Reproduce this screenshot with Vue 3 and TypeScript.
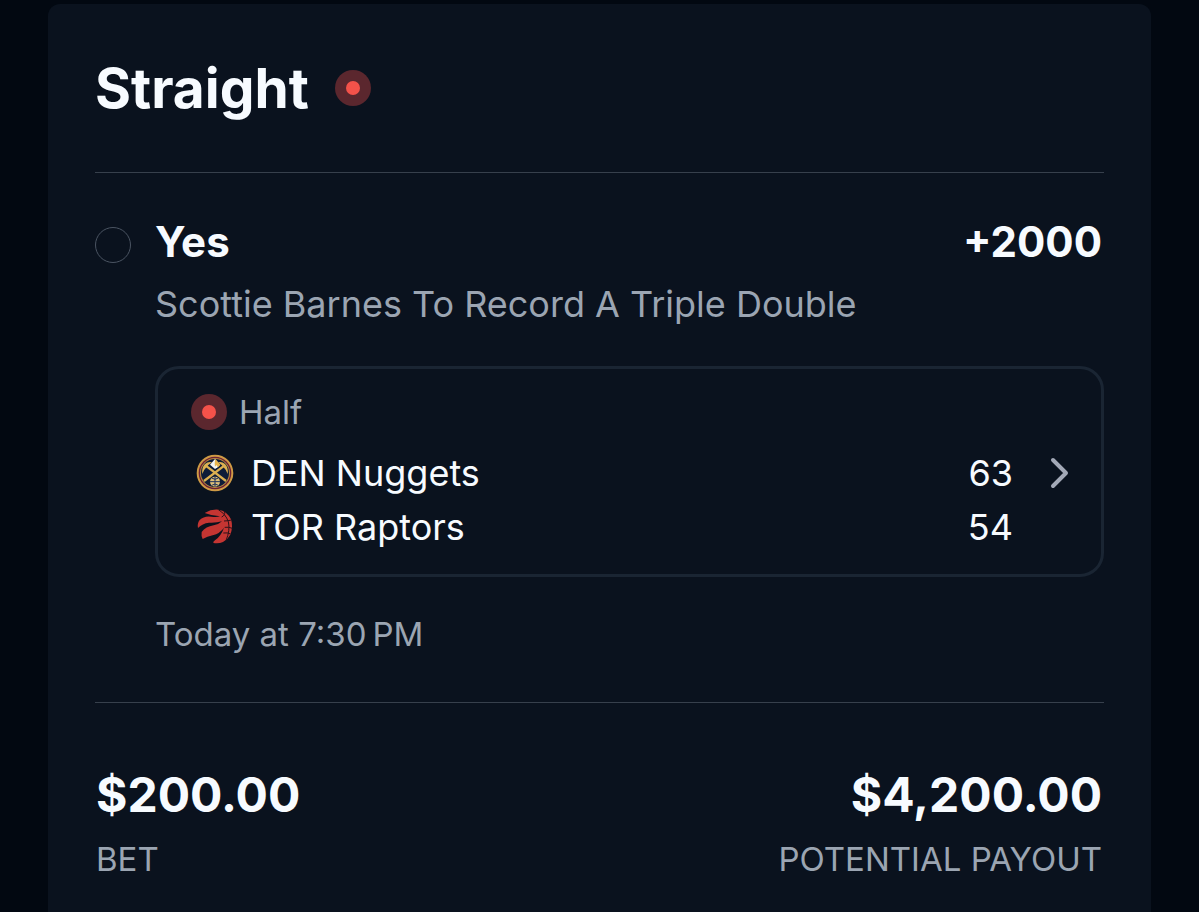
<script setup lang="ts">
import { ref } from 'vue'

interface Team {
  id: 'den' | 'tor'
  name: string
  score: number
}

const picked = ref<boolean>(false)

const bet = {
  type: 'Straight',
  pick: 'Yes',
  odds: '+2000',
  market: 'Scottie Barnes To Record A Triple Double',
  period: 'Half',
  start: 'Today at 7:30\u2009PM',
}

const teams: Team[] = [
  { id: 'den', name: 'DEN Nuggets', score: 63 },
  { id: 'tor', name: 'TOR Raptors', score: 54 },
]

const totals = [
  { amount: '$200.00', label: 'BET' },
  { amount: '$4,200.00', label: 'POTENTIAL PAYOUT' },
]
</script>

<template>
  <main class="page">
    <article class="slip">
      <header class="slip-header">
        <h1 class="title">{{ bet.type }}</h1>
        <span class="live" role="img" aria-label="Live"></span>
      </header>

      <section class="selection">
        <input id="pick" class="radio" type="radio" :checked="picked" @change="picked = true" />
        <div class="details">
          <div class="pick-row">
            <label for="pick">{{ bet.pick }}</label>
            <span>{{ bet.odds }}</span>
          </div>
          <p class="market">{{ bet.market }}</p>

          <button class="game" type="button">
            <span class="status">
              <span class="live"></span>
              <span>{{ bet.period }}</span>
            </span>
            <span v-for="team in teams" :key="team.id" class="team">
              <svg v-if="team.id === 'den'" class="logo" viewBox="18 16 114 114" aria-hidden="true">
                <circle cx="75" cy="73" r="55" fill="#cf9a45" />
                <circle cx="75" cy="73" r="49" fill="#6b2035" />
                <circle cx="75" cy="73" r="45" fill="#b98a3e" />
                <circle cx="75" cy="73" r="42" fill="#0e1c38" />
                <g fill="none" stroke="#dcb050" stroke-width="7">
                  <path d="M46 50 L108 97" />
                  <path d="M104 50 L42 97" />
                </g>
                <path d="M37 76 Q34 57 45 46 Q54 38 66 41 Q55 48 50 55 Q42 62 37 76Z" fill="#dcb050" />
                <path d="M113 76 Q116 57 105 46 Q96 38 84 41 Q95 48 100 55 Q108 62 113 76Z" fill="#dcb050" />
                <path d="M75 31 L90 48 L83 56 L75 61 L60 48Z" fill="#f3f5f4" />
                <path d="M76 31 L91 48 L84 56 L79 49 L75 54 L74 44Z" fill="#e8b64e" />
                <circle cx="75" cy="99" r="15" fill="#dfc078" />
                <g fill="none" stroke="#1d315c" stroke-width="3">
                  <path d="M75 84V114M60 99H90M65 88Q75 96 85 88M65 110Q75 102 85 110" />
                </g>
              </svg>
              <svg v-else class="logo" viewBox="6 6 114 114" aria-hidden="true">
                <path
                  fill="#c43532"
                  d="M32 21 Q52 9 73 11 Q99 15 111 40 Q118 62 109 86 Q101 101 87 108 Q74 114 58 111 Q57 107 63 103 Q81 90 90 65 Q78 82 56 88 Q40 92 26 99 Q21 89 23 78 Q35 62 59 58 Q75 55 84 46 Q68 51 45 50 Q25 52 12 66 Q9 52 17 42 Q30 29 52 32 Q68 34 78 31 Q55 30 32 21Z"
                />
                <g fill="none" stroke="#2b1219" stroke-width="3">
                  <path d="M73 11 Q95 24 103 47 Q109 72 96 104" />
                  <path d="M92 17 Q94 28 83 33" />
                  <path d="M90 45 Q102 45 112 42" />
                  <path d="M92 64 Q104 62 115 67" />
                  <path d="M110 84 Q101 79 88 81" />
                </g>
              </svg>
              <span class="name">{{ team.name }}</span>
              <span class="score">{{ team.score }}</span>
              <svg v-if="team.id === 'den'" class="chevron" viewBox="0 0 24 36" aria-hidden="true">
                <path d="M5 5 L18 18 L5 31" />
              </svg>
            </span>
          </button>

          <time class="start">{{ bet.start }}</time>
        </div>
      </section>

      <footer class="totals">
        <div v-for="total in totals" :key="total.label" class="total">
          <strong class="amount">{{ total.amount }}</strong>
          <span class="label">{{ total.label }}</span>
        </div>
      </footer>
    </article>
  </main>
</template>

<style>
body {
  margin: 0;
  background: #020811;
}
</style>

<style scoped>
.page {
  box-sizing: border-box;
  display: flex;
  min-height: 100vh;
  padding: 4px 48px 0;
  background: #020811;
  color: #f7fbff;
  font-family: Inter, "Liberation Sans", sans-serif;
}

.slip {
  box-sizing: border-box;
  flex: 1;
  min-width: 0;
  padding: 0 47px;
  border-radius: 12px 12px 0 0;
  background: #0a121e;
}

.slip-header {
  display: flex;
  align-items: center;
  gap: 26px;
  padding: 48px 0;
  border-bottom: 1px solid #37404c;
}

.title {
  margin: 0;
  font-size: 55px;
  line-height: 72px;
  font-weight: 700;
}

.live {
  display: grid;
  place-items: center;
  width: 36px;
  height: 36px;
  border-radius: 50%;
  background: #5b272e;
}

.live::before {
  content: "";
  width: 14px;
  height: 14px;
  border-radius: 50%;
  background: #f4524a;
}

.selection {
  display: flex;
  align-items: flex-start;
  gap: 24px;
  padding: 45px 0 48px;
  border-bottom: 1px solid #37404c;
}

.radio {
  appearance: none;
  box-sizing: border-box;
  flex: none;
  width: 36px;
  height: 36px;
  margin: 9px 0 0;
  border: 1px solid #4a5462;
  border-radius: 50%;
}

.radio:checked {
  border: 10px solid #f4524a;
}

.details {
  flex: 1;
  min-width: 0;
}

.pick-row {
  display: flex;
  justify-content: space-between;
  padding-right: 2px;
  font-size: 42px;
  line-height: 48px;
  font-weight: 700;
}

.market {
  margin: 14px 0 38px;
  color: #9ba5b2;
  font-size: 36px;
  line-height: 48px;
}

.game {
  box-sizing: border-box;
  display: block;
  width: 100%;
  padding: 23px 29px 20px 33px;
  border: 3px solid #1a2533;
  border-radius: 24px;
  background: none;
  color: inherit;
  font: inherit;
  text-align: left;
  cursor: pointer;
}

.status {
  display: flex;
  align-items: center;
  gap: 12px;
  margin-bottom: 14px;
  color: #9ba5b2;
  font-size: 33px;
  line-height: 40px;
}

.team {
  display: grid;
  grid-template-columns: 38px 1fr auto 24px;
  align-items: center;
  column-gap: 17px;
  padding-left: 5px;
  font-size: 36px;
  line-height: 54px;
}

.logo {
  width: 38px;
  height: 38px;
}

.score {
  margin-right: 18px;
}

.chevron {
  width: 24px;
  height: 36px;
  fill: none;
  stroke: #a3a9b7;
  stroke-width: 4;
  stroke-linecap: round;
  stroke-linejoin: round;
}

.start {
  display: block;
  margin-top: 37px;
  color: #9ba5b2;
  font-size: 33px;
  line-height: 40px;
}

.totals {
  display: flex;
  justify-content: space-between;
  padding: 66px 2px 32px 1px;
}

.total {
  display: flex;
  flex-direction: column;
  gap: 18px;
}

.total:last-child {
  text-align: right;
}

.amount {
  font-size: 48px;
  line-height: 52px;
  font-weight: 700;
}

.label {
  color: #9ba5b2;
  font-size: 33px;
  line-height: 40px;
}
</style>
